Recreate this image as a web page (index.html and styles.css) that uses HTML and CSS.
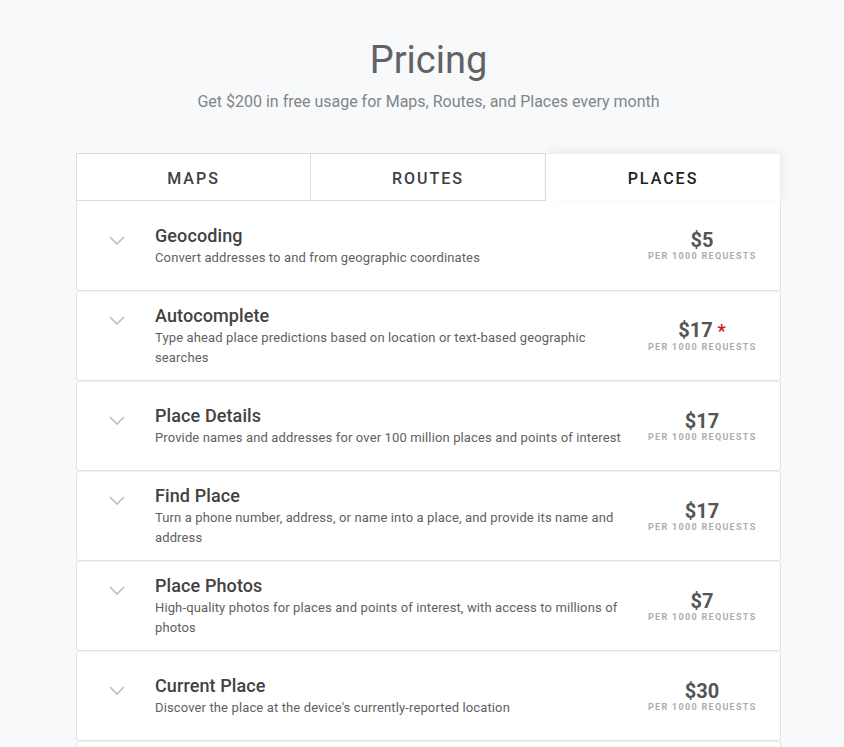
FILE: index.html
```html
<!DOCTYPE html>
<html lang="en">
<head>
<meta charset="utf-8">
<title>Pricing</title>
<link rel="stylesheet" href="styles.css">
</head>
<body>
<main class="page">
  <h1 class="title">Pricing</h1>
  <p class="subtitle">Get $200 in free usage for Maps, Routes, and Places every month</p>

  <section class="pricing">
    <div class="tabs">
      <div class="tab">MAPS</div>
      <div class="tab">ROUTES</div>
      <div class="tab tab-active">PLACES</div>
    </div>

    <div class="rows">
      <div class="row">
        <div class="lead">
          <svg class="chev" viewBox="0 0 16 9" width="16" height="9"><path d="M1 1l7 7 7-7"/></svg>
          <div class="info">
            <div class="name">Geocoding</div>
            <div class="desc">Convert addresses to and from geographic coordinates</div>
          </div>
        </div>
        <div class="price"><div class="amount">$5</div><div class="unit">PER 1000 REQUESTS</div></div>
      </div>

      <div class="row">
        <div class="lead">
          <svg class="chev" viewBox="0 0 16 9" width="16" height="9"><path d="M1 1l7 7 7-7"/></svg>
          <div class="info">
            <div class="name">Autocomplete</div>
            <div class="desc">Type ahead place predictions based on location or text-based geographic searches</div>
          </div>
        </div>
        <div class="price"><div class="amount">$17 <span class="star">*</span></div><div class="unit">PER 1000 REQUESTS</div></div>
      </div>

      <div class="row">
        <div class="lead">
          <svg class="chev" viewBox="0 0 16 9" width="16" height="9"><path d="M1 1l7 7 7-7"/></svg>
          <div class="info">
            <div class="name">Place Details</div>
            <div class="desc">Provide names and addresses for over 100 million places and points of interest</div>
          </div>
        </div>
        <div class="price"><div class="amount">$17</div><div class="unit">PER 1000 REQUESTS</div></div>
      </div>

      <div class="row">
        <div class="lead">
          <svg class="chev" viewBox="0 0 16 9" width="16" height="9"><path d="M1 1l7 7 7-7"/></svg>
          <div class="info">
            <div class="name">Find Place</div>
            <div class="desc">Turn a phone number, address, or name into a place, and provide its name and address</div>
          </div>
        </div>
        <div class="price"><div class="amount">$17</div><div class="unit">PER 1000 REQUESTS</div></div>
      </div>

      <div class="row">
        <div class="lead">
          <svg class="chev" viewBox="0 0 16 9" width="16" height="9"><path d="M1 1l7 7 7-7"/></svg>
          <div class="info">
            <div class="name">Place Photos</div>
            <div class="desc">High-quality photos for places and points of interest, with access to millions of photos</div>
          </div>
        </div>
        <div class="price"><div class="amount">$7</div><div class="unit">PER 1000 REQUESTS</div></div>
      </div>

      <div class="row">
        <div class="lead">
          <svg class="chev" viewBox="0 0 16 9" width="16" height="9"><path d="M1 1l7 7 7-7"/></svg>
          <div class="info">
            <div class="name">Current Place</div>
            <div class="desc">Discover the place at the device's currently-reported location</div>
          </div>
        </div>
        <div class="price"><div class="amount">$30</div><div class="unit">PER 1000 REQUESTS</div></div>
      </div>

      <div class="row row-cut"></div>
    </div>
  </section>
</main>
</body>
</html>
```

FILE: styles.css
```css
* { box-sizing: border-box; }

html, body {
  margin: 0;
  padding: 0;
  background: #f8f9fa;
  font-family: Roboto, "Liberation Sans", Arial, sans-serif;
  color: #424242;
}

.page {
  width: 705px;
  margin: 0 0 0 76px;
  padding-top: 36px;
  display: flex;
  flex-direction: column;
  align-items: stretch;
}

.title {
  margin: 0;
  text-align: center;
  font-size: 38px;
  line-height: 48px;
  font-weight: 400;
  color: #5f6368;
}

.subtitle {
  margin: 8px 0 0;
  text-align: center;
  font-size: 16px;
  line-height: 20px;
  color: #80868b;
}

.pricing {
  margin-top: 41px;
}

.tabs {
  display: grid;
  grid-template-columns: repeat(3, 1fr);
  height: 48px;
}

.tab {
  display: flex;
  align-items: center;
  justify-content: center;
  background: #fff;
  border: 1px solid #dadce0;
  border-left-width: 0;
  font-size: 16px;
  font-weight: 500;
  letter-spacing: 2px;
  color: #3c4043;
  padding-top: 2px;
}

.tab:first-child { border-left-width: 1px; }

.tab-active {
  border-bottom-color: transparent;
  border-top-color: #eceff1;
  border-right-color: #eceff1;
  color: #202124;
  box-shadow: 2px -2px 8px rgba(0, 0, 0, 0.06);
  position: relative;
}

.rows {
  display: flex;
  flex-direction: column;
}

.row {
  height: 90px;
  display: flex;
  align-items: center;
  background: #fff;
  border: 1px solid #e2e3e5;
  border-top-color: #eeeff1;
  border-radius: 3px;
  padding: 0 24px 0 32px;
}

.row:first-child {
  border-top: none;
  border-radius: 0 0 3px 3px;
}

.lead {
  flex: 1;
  min-width: 0;
  display: flex;
  align-items: flex-start;
}

.chev {
  flex: none;
  fill: none;
  stroke: #bdbdbd;
  stroke-width: 1.6;
  margin-right: 30px;
  margin-top: 12px;
}

.info {
  flex: 1;
  min-width: 0;
  padding-right: 14px;
}

.name {
  font-size: 18px;
  line-height: 24px;
  font-weight: 500;
  color: #424242;
  letter-spacing: 0.1px;
}

.desc {
  font-size: 13px;
  line-height: 20px;
  color: #616161;
  letter-spacing: 0.13px;
}

.price {
  flex: none;
  width: 108px;
  text-align: center;
  margin-top: 1px;
}

.amount {
  font-size: 20px;
  line-height: 20px;
  font-weight: 700;
  color: #555;
}

.star {
  color: #c5221f;
  font-size: 18px;
}

.unit {
  font-size: 9px;
  line-height: 12px;
  font-weight: 700;
  letter-spacing: 1.3px;
  color: #adadad;
  white-space: nowrap;
}
```
